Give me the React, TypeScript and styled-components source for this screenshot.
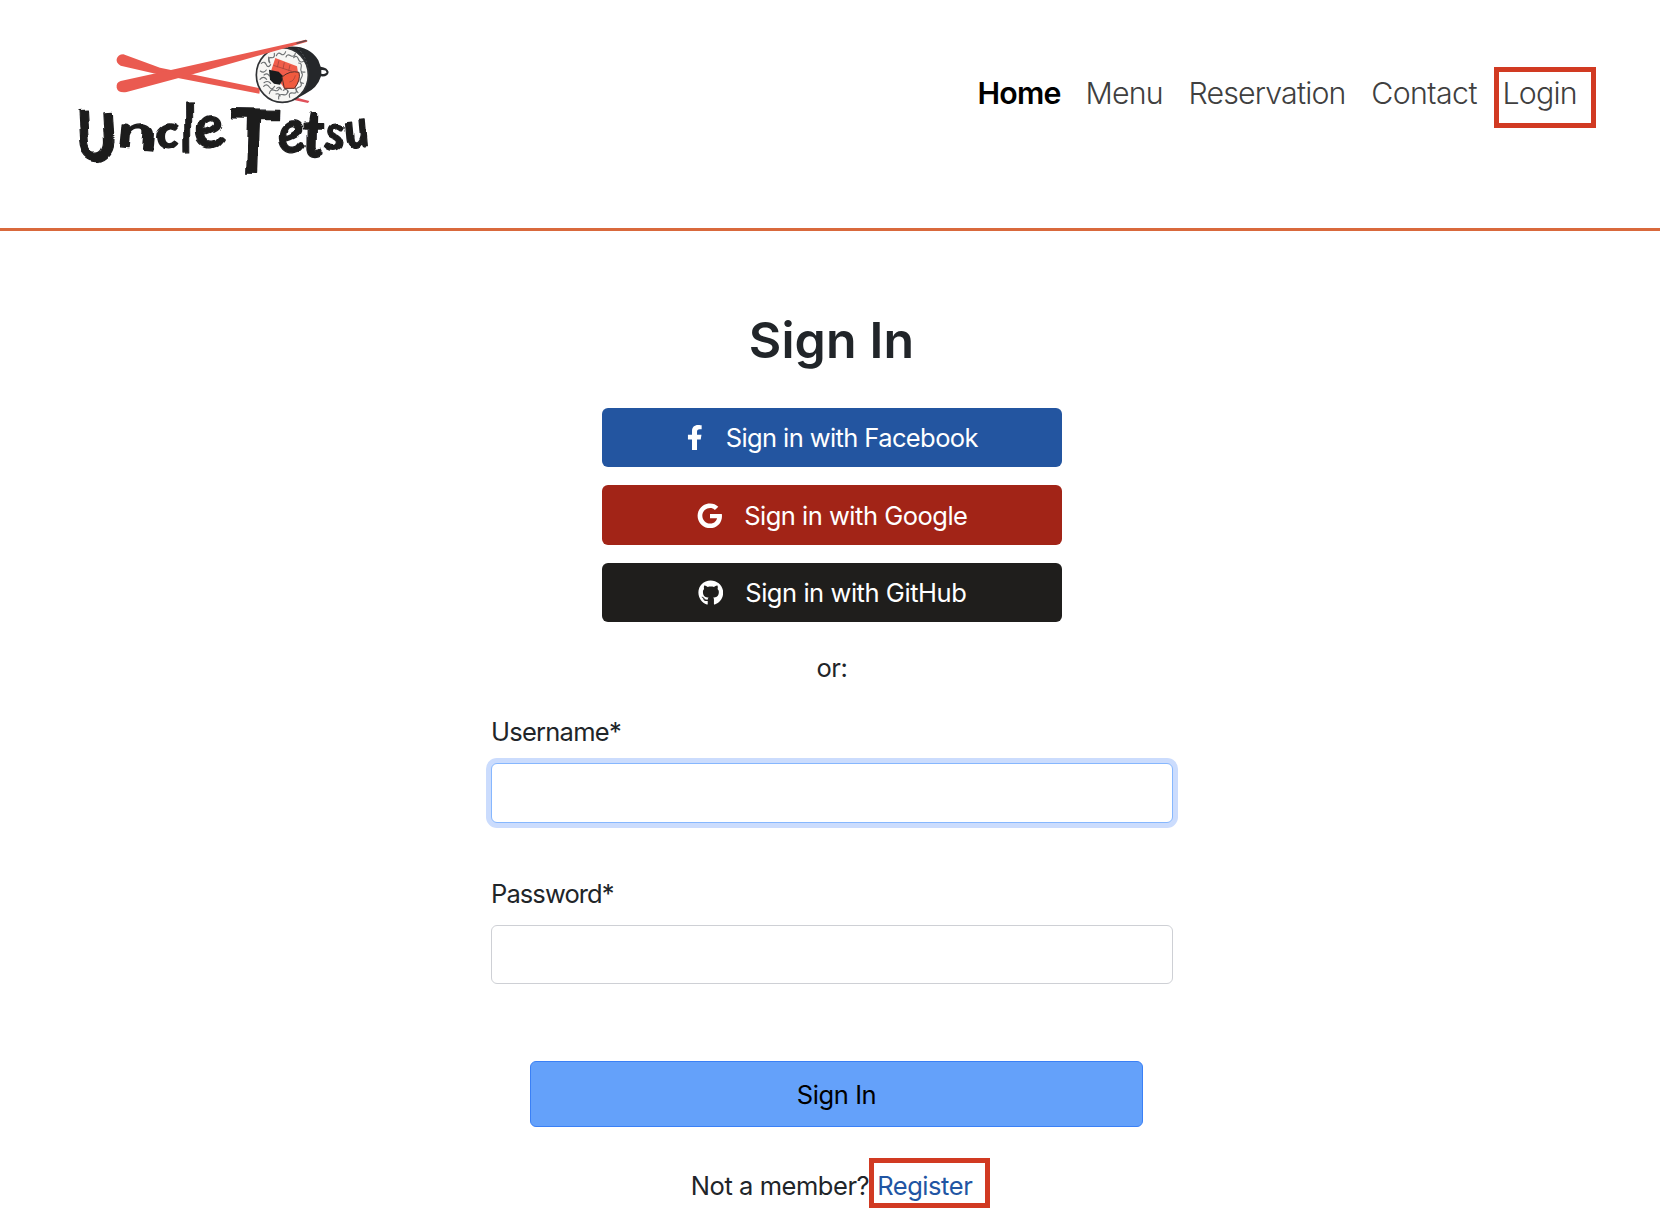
import React from "react";
import styled, { createGlobalStyle } from "styled-components";
import { FaFacebookF, FaGoogle, FaGithub } from "react-icons/fa";

const GlobalStyle = createGlobalStyle`
  *, *::before, *::after { box-sizing: border-box; }
  body {
    margin: 0;
    background: #fff;
    color: #212529;
    font-family: Inter, "Liberation Sans", sans-serif;
    font-size: 25.5px;
    line-height: 38px;
  }
`;

const Page = styled.div`
  min-height: 1216px;
  overflow: hidden;
`;

const Header = styled.header`
  display: flex;
  justify-content: space-between;
  align-items: flex-start;
  height: 231px;
  padding: 20px 64px 0 60px;
  border-bottom: 3px solid #d9693c;
`;

const LogoArt = styled.svg`
  display: block;
  overflow: visible;
  width: 330px;
  height: 170px;
  filter: blur(0.45px);
`;

const Nav = styled.nav`
  display: flex;
  align-items: flex-start;
  padding-top: 47px;
`;

const NavLink = styled.a<{ $active?: boolean; $gap?: number; $tracking?: number }>`
  margin-right: ${(p) => p.$gap ?? 25.5}px;
  padding-top: 5px;
  color: ${(p) => (p.$active ? "#000" : "#404040")};
  font-size: 30.3px;
  line-height: 42px;
  font-weight: ${(p) => (p.$active ? 600 : 300)};
  letter-spacing: ${(p) => p.$tracking ?? -0.8}px;
  text-decoration: none;
`;

const Highlight = styled.span<{ $w: number; $h: number; $pad: string }>`
  display: block;
  width: ${(p) => p.$w}px;
  height: ${(p) => p.$h}px;
  padding: ${(p) => p.$pad};
  border: 5px solid #d13a22;
  white-space: nowrap;
`;

const Main = styled.main`
  display: flex;
  flex-direction: column;
  align-items: center;
  padding: 79px 0 0 4px;
`;

const Title = styled.h1`
  margin: 0 1px 38px 0;
  font-size: 50px;
  line-height: 60px;
  font-weight: 600;
  letter-spacing: 0.15px;
`;

const Providers = styled.div`
  display: flex;
  flex-direction: column;
  gap: 18px;
  width: 460px;
`;

const ProviderButton = styled.button<{ $bg: string; $h: number; $gap: number; $tracking: number; $pad?: string }>`
  display: flex;
  align-items: center;
  justify-content: center;
  gap: ${(p) => p.$gap}px;
  height: ${(p) => p.$h}px;
  padding: ${(p) => p.$pad ?? "0"};
  border: 0;
  border-radius: 6px;
  background: ${(p) => p.$bg};
  color: #fff;
  font: inherit;
  letter-spacing: ${(p) => p.$tracking}px;
  svg { width: auto; height: 25.6px; }
`;

const Or = styled.p`
  margin: 27px 0 26px;
  letter-spacing: -0.4px;
`;

const Field = styled.label<{ $space: number; $tracking: number }>`
  display: flex;
  flex-direction: column;
  gap: 12px;
  width: 682px;
  margin-bottom: ${(p) => p.$space}px;
  letter-spacing: ${(p) => p.$tracking}px;
`;

const Input = styled.input<{ $focused?: boolean }>`
  width: 100%;
  height: ${(p) => (p.$focused ? 60 : 59)}px;
  padding: 0 18px;
  border: 1px solid ${(p) => (p.$focused ? "#86b7fe" : "#ced0d5")};
  border-radius: 6px;
  box-shadow: ${(p) => (p.$focused ? "0 0 0 5px #cbdcfd" : "none")};
  outline: 0;
  font: inherit;
`;

const Submit = styled.button`
  width: 613px;
  height: 66px;
  margin-left: 9px;
  padding: 2px 0 0;
  border: 1px solid #3a80f6;
  border-radius: 6px;
  background: #64a1fa;
  color: #000;
  font: inherit;
  letter-spacing: -0.4px;
`;

const Member = styled.div`
  display: flex;
  align-items: flex-start;
  margin: 31px 0 0 17px;
  letter-spacing: -0.45px;
`;

const MemberText = styled.span`
  padding-top: 9px;
`;

const RegisterLink = styled.a`
  color: #2155a3;
  text-decoration: none;
`;

type Glyph = { c: string; x: number; y: number; size: number; sx: number; rot: number; weight?: number };

const glyphs: Glyph[] = [
  { c: "U", x: 58, y: 424, size: 205, sx: 0.86, rot: -4 },
  { c: "n", x: 176, y: 386, size: 146, sx: 1.45, rot: 4, weight: 700 },
  { c: "c", x: 291, y: 388, size: 140, sx: 1.15, rot: -4 },
  { c: "l", x: 372, y: 396, size: 205, sx: 0.75, rot: -1 },
  { c: "e", x: 424, y: 382, size: 170, sx: 0.95, rot: -10, weight: 700 },
  { c: "T", x: 512, y: 458, size: 262, sx: 1.04, rot: 1, weight: 700 },
  { c: "e", x: 670, y: 400, size: 170, sx: 0.95, rot: -10, weight: 700 },
  { c: "t", x: 732, y: 404, size: 185, sx: 0.95, rot: 0, weight: 700 },
  { c: "s", x: 795, y: 391, size: 160, sx: 0.96, rot: 4, weight: 700 },
  { c: "u", x: 862, y: 380, size: 145, sx: 0.92, rot: -6 },
];

const Logo = () => (
  <LogoArt viewBox="0 0 990 510" role="img" aria-label="Uncle Tetsu">
    <defs>
      <clipPath id="rice"><ellipse cx="667" cy="165" rx="78" ry="81" /></clipPath>
      <filter id="brush" x="-5%" y="-5%" width="110%" height="110%">
        <feTurbulence type="fractalNoise" baseFrequency="0.011 0.009" numOctaves="1" seed="4" />
        <feDisplacementMap in="SourceGraphic" scale="36" xChannelSelector="R" yChannelSelector="G" />
        <feGaussianBlur stdDeviation="1.2" />
      </filter>
    </defs>
    <path d="M190 103 L300 143 L600 205 L598 221 L280 160 L182 137 Q168 130 170 117 Q174 103 190 103Z" fill="#ea5a50" />
    <path d="M700 230 L748 243 L744 249 L705 241Z" fill="#e0505a" />
    <path d="M684 80 Q748 75 775 121 L782 140 Q803 143 806 156 Q804 171 783 169 Q772 205 736 221 L706 238 Z" fill="#25272a" />
    <path d="M784 150 Q799 149 799 157 Q797 164 784 161Z" fill="#fff" />
    <path d="M714 85 Q770 145 722 226" fill="none" stroke="#55585c" strokeWidth="3" strokeDasharray="5 6" />
    <ellipse cx="667" cy="165" rx="78" ry="82" fill="#f7f6f4" stroke="#303235" strokeWidth="5" />
    <g clipPath="url(#rice)" fill="none" stroke="#6d7072" strokeWidth="3.4" strokeLinecap="round">
      <path d="M604 130q10-8 15 4t13 0M601 153q10 8 18-3M600 178q10-12 20 0M611 199q9-10 17 2t16-2M628 221q3-15 15-10t16-8M656 237q-2-16 13-13t14-13M689 232q-5-15 10-13t7-14M714 218q-11-12 2-16t5-16M730 190q-15-2-7-15t1-17M735 156q-16 3-12-12t-7-15M731 124q-12 6-16-7t-14-4M706 100q-3 13-14 7t-14 4M677 95q-5 14-14 7t-14 5M643 100q2 15-9 13t-5 13M626 111q-2 14 4 18" />
      <path d="M650 205q9-8 14 4M670 211q10-7 15 5M612 165q10-8 16 3M612 188q12-8 20 2M648 222q10-3 12 6" />
    </g>
    <path d="M646 114 L711 139 L718 181 L706 205 L674 207 L659 185 L634 150Z" fill="#f05d4b" />
    <path d="M627 149 L656 155 L672 171 L660 194 L642 191 L630 179Z" fill="#191b1d" />
    <path d="M666 171 Q690 150 717 157 Q723 180 703 205 L673 205Z" fill="#f15a3e" stroke="#57302b" strokeWidth="3" />
    <path d="M640 136l56 18M657 121l-5 21M673 127l-4 20M690 135l-4 18M688 186q14-2 18-20" fill="none" stroke="#a8453c" strokeWidth="2.5" />
    <path d="M182 183 L350 146 L738 59 L742 65 L420 157 L200 216 Q174 220 170 203 Q168 187 182 183Z" fill="#ea5a50" />
    <path d="M708 68 L738 59 L743 63 L711 72Z" fill="#68484b" />
    <g filter="url(#brush)" fill="#1c1c1e" stroke="#1c1c1e" strokeWidth="4" strokeLinejoin="round" fontFamily="Lato, sans-serif" fontStyle="italic">
      {glyphs.map((g, i) => (
        <text key={i} fontSize={g.size} fontWeight={g.weight ?? 900} transform={`translate(${g.x} ${g.y}) rotate(${g.rot}) scale(${g.sx} 1) skewX(6)`}>{g.c}</text>
      ))}
    </g>
  </LogoArt>
);

export default function App() {
  return (
    <>
      <GlobalStyle />
      <Page>
        <Header>
          <Logo />
          <Nav>
            <NavLink $active $gap={25}>Home</NavLink>
            <NavLink>Menu</NavLink>
            <NavLink>Reservation</NavLink>
            <NavLink $gap={17} $tracking={-0.55}>Contact</NavLink>
            <Highlight $w={102} $h={61} $pad="0 0 0 3.5px">
              <NavLink $gap={0}>Login</NavLink>
            </Highlight>
          </Nav>
        </Header>
        <Main>
          <Title>Sign In</Title>
          <Providers>
            <ProviderButton $bg="#2355a0" $h={59} $gap={18} $tracking={-0.6} $pad="0 4px 0 0"><FaFacebookF />Sign in with Facebook</ProviderButton>
            <ProviderButton $bg="#a22417" $h={60} $gap={22} $tracking={-0.5} $pad="1px 0 0"><FaGoogle />Sign in with Google</ProviderButton>
            <ProviderButton $bg="#1f1e1c" $h={59} $gap={22} $tracking={-0.45}><FaGithub />Sign in with GitHub</ProviderButton>
          </Providers>
          <Or>or:</Or>
          <Field $space={52} $tracking={-0.75}>Username*<Input $focused /></Field>
          <Field $space={77} $tracking={-0.9}>Password*<Input type="password" /></Field>
          <Submit>Sign In</Submit>
          <Member>
            <MemberText>Not a member?</MemberText>
            <Highlight $w={121} $h={50} $pad="4px 0 0 3px">
              <RegisterLink>Register</RegisterLink>
            </Highlight>
          </Member>
        </Main>
      </Page>
    </>
  );
}
